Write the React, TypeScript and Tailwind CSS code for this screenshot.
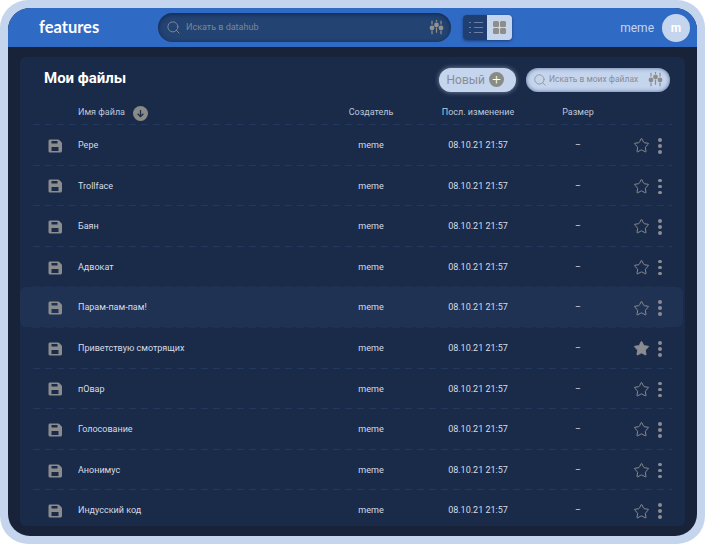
import { Search, Star } from 'lucide-react';

const FILES = [
  'Pepe',
  'Trollface',
  'Баян',
  'Адвокат',
  'Парам-пам-пам!',
  'Приветствую смотрящих',
  'пОвар',
  'Голосование',
  'Анонимус',
  'Индусский код',
];

const GRID = 'grid grid-cols-[58px_253px_80px_134px_66px_1fr] items-center';
const DASH = 'h-px mx-[13px] bg-[repeating-linear-gradient(90deg,#24395f_0_7px,transparent_7px_12px)]';
const DASH_LIT = 'h-px ml-[13px] mr-[15px] bg-[repeating-linear-gradient(90deg,#1f3254_0_7px,transparent_7px_12px)]';

function Sliders({ className }: { className: string }) {
  return (
    <svg viewBox="0 0 20 20" className={className} fill="currentColor">
      <rect x="3.2" y="1" width="1.6" height="5" />
      <rect x="3.2" y="14" width="1.6" height="5" />
      <circle cx="4" cy="10.5" r="3.2" />
      <rect x="9.2" y="0" width="1.6" height="2.5" />
      <rect x="9.2" y="10" width="1.6" height="7" />
      <circle cx="10" cy="6.5" r="3.2" />
      <rect x="15.2" y="1" width="1.6" height="5" />
      <rect x="15.2" y="14" width="1.6" height="5" />
      <circle cx="16" cy="10.5" r="3.2" />
    </svg>
  );
}

function Floppy() {
  return (
    <svg viewBox="0 0 14 14" className="w-[14px] h-[14px] text-[#8a8c8e]">
      <path
        fill="currentColor"
        fillRule="evenodd"
        d="M2 0.5h8.2c.4 0 .8.2 1.1.5l2.2 2.2c.3.3.5.7.5 1.1V12c0 .8-.7 1.5-1.5 1.5H2C1.200 13.500.5 12.800.5 12V2C.5 1.200 1.200.5 2 .5ZM3.500 2v2.500h6V2ZM3.500 8v4h7V8Z"
      />
    </svg>
  );
}

function Dots() {
  return (
    <div className="flex flex-col gap-[2.5px]">
      <span className="w-[3.5px] h-[3.5px] rounded-full bg-[#8b8d92]" />
      <span className="w-[3.5px] h-[3.5px] rounded-full bg-[#8b8d92]" />
      <span className="w-[3.5px] h-[3.5px] rounded-full bg-[#8b8d92]" />
    </div>
  );
}

export default function App() {
  return (
    <div className="h-[544px] w-[705px] bg-white overflow-hidden font-['Roboto',sans-serif]">
      <div className="h-full rounded-[28px] bg-[#c5d5ee] p-2">
        <div className="h-full rounded-[22px] overflow-hidden bg-[#18233a] flex flex-col">
          {/* top bar */}
          <header className="h-[39px] shrink-0 bg-[#2f6bc4] flex items-center pl-[31px] pr-[7px]">
            <span className="w-[119px] text-[16.5px] leading-none font-bold text-white font-['Lato',sans-serif]">
              features
            </span>
            <div className="w-[293px] h-[29px] rounded-full bg-[#234373] shadow-[inset_0_1px_4px_rgba(10,25,60,0.7)] flex items-center pl-[8px] pr-[7px]">
              <Search className="w-[15px] h-[15px] text-[#8b8f96]" strokeWidth={1.4} />
              <span className="ml-[5px] text-[9px] text-[#7f8794]">Искать в datahub</span>
              <Sliders className="ml-auto w-[15px] h-[15px] text-[#92918a]" />
            </div>
            <div className="ml-[12px] flex h-[25px] w-[49px] rounded-[4px] overflow-hidden shadow-[0_1px_3px_rgba(15,30,70,0.6)]">
              <div className="w-[24px] bg-[#1f3f73] flex flex-col justify-center gap-[4px] pl-[6px]">
                {[0, 1, 2].map((i) => (
                  <div key={i} className="flex items-center gap-[3px]">
                    <span className="w-[2px] h-px bg-[#6d7f9c]" />
                    <span className="w-[9px] h-px bg-[#6d7f9c]" />
                  </div>
                ))}
              </div>
              <div className="flex-1 bg-[#c5d5ee] grid grid-cols-2 gap-[1.5px] p-[6px]">
                <span className="rounded-[1.5px] bg-[#8d8d89]" />
                <span className="rounded-[1.5px] bg-[#8d8d89]" />
                <span className="rounded-[1.5px] bg-[#8d8d89]" />
                <span className="rounded-[1.5px] bg-[#8d8d89]" />
              </div>
            </div>
            <span className="ml-auto text-[12px] text-[#c5d5ee]">meme</span>
            <div className="ml-[8px] w-[28px] h-[28px] rounded-full bg-[#c5d5ee] flex items-center justify-center text-[12px] font-bold text-white">
              m
            </div>
          </header>

          <div className="flex-1 min-h-0 pl-[12px] pr-[12px] pt-[10px] pb-[10px]">
            <main className="h-full rounded-[6px] bg-[#1a2a49] overflow-hidden">
              {/* title and actions */}
              <div className="h-[45px] flex items-center pl-[24px] pr-[15px]">
                <h1 className="text-[15px] font-bold text-white leading-none mb-[2px]">Мои файлы</h1>
                <button className="ml-auto h-[24px] w-[77px] rounded-full bg-[#c5d5ee] shadow-[0_0_5px_rgba(197,213,238,0.6)] flex items-center justify-end gap-[4px] pr-[12px] text-[12px] text-[#8b8d8f]">
                  Новый
                  <span className="w-[15px] h-[15px] rounded-full bg-[#8b8b85] flex items-center justify-center text-white text-[15px] leading-none font-light">
                    +
                  </span>
                </button>
                <div className="ml-[10px] h-[24px] w-[144px] rounded-full bg-[#c5d5ee] shadow-[inset_0_0_4px_rgba(50,75,120,0.8)] flex items-center pl-[7px] pr-[7px]">
                  <Search className="w-[14px] h-[14px] text-[#8d8f91]" strokeWidth={1.4} />
                  <span className="ml-[2px] text-[8.5px] text-[#8b8d8f] whitespace-nowrap">Искать в моих файлах</span>
                  <Sliders className="ml-auto w-[15px] h-[15px] text-[#8d8d89]" />
                </div>
              </div>

              {/* column heads */}
              <div className={`${GRID} h-[22px] text-[9px] text-[#bcc8dc]`}>
                <span />
                <div className="flex items-center gap-[8px]">
                  Имя файла
                  <span className="w-[15px] h-[15px] rounded-full bg-[#8b8b85] flex items-center justify-center">
                    <svg viewBox="0 0 10 10" className="w-[9px] h-[9px]" fill="none" stroke="#1a2a49" strokeWidth="1.4">
                      <path d="M5 1v7.5M1.8 5.3 5 8.500l3.200-3.200" />
                    </svg>
                  </span>
                </div>
                <span className="text-center">Создатель</span>
                <span className="text-center">Посл. изменение</span>
                <span className="text-center">Размер</span>
                <span />
              </div>
              <div className={DASH} />

              {/* rows */}
              {FILES.map((name, i) => (
                <div key={name}>
                  <div
                    className={`${GRID} h-[39.6px] pt-[2px] text-[9px] text-[#d5dce8] ${
                      i === 4 ? 'bg-[#1f3254] mr-[2px] rounded-[6px]' : ''
                    }`}
                  >
                    <div className="flex justify-center pl-[12px]">
                      <Floppy />
                    </div>
                    <span>{name}</span>
                    <span className="text-center">meme</span>
                    <span className="text-center">08.10.21 21:57</span>
                    <span className="text-center">–</span>
                    <div className="flex items-center pl-[22px] gap-[8px]">
                      <Star
                        className="w-[17px] h-[17px] text-[#8a8c90]"
                        strokeWidth={1.4}
                        fill={i === 5 ? '#8a8c90' : 'none'}
                      />
                      <Dots />
                    </div>
                  </div>
                  {i < FILES.length - 1 && <div className={i === 3 || i === 4 ? DASH_LIT : DASH} />}
                </div>
              ))}
            </main>
          </div>
        </div>
      </div>
    </div>
  );
}
